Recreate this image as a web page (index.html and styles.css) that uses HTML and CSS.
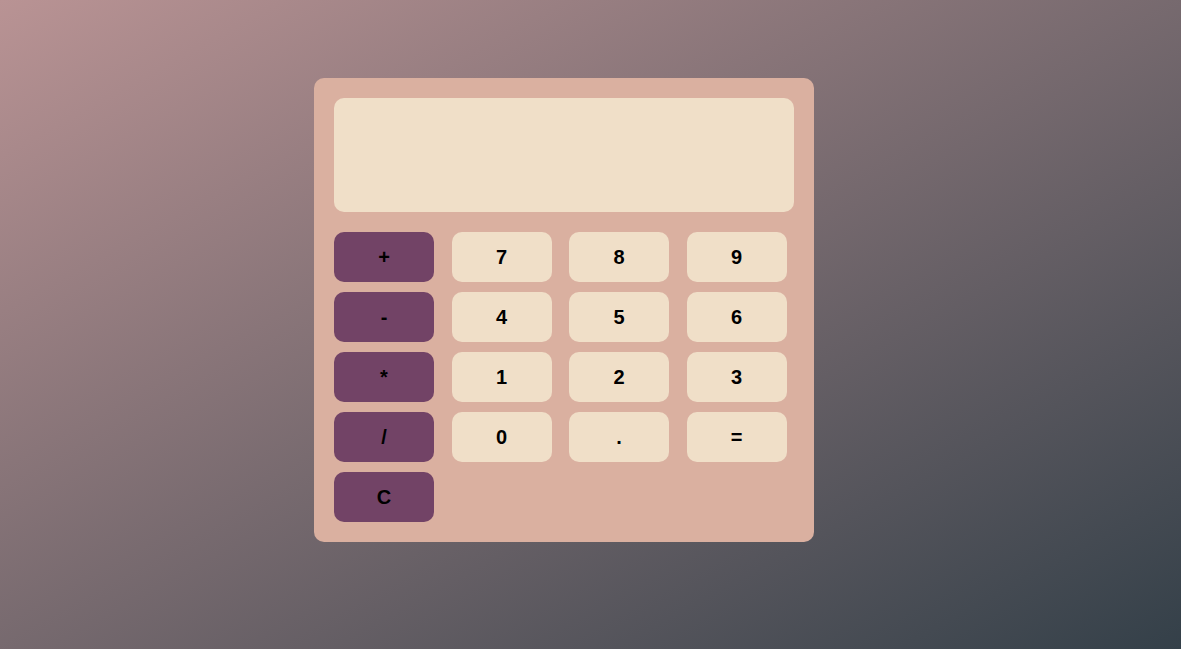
FILE: index.html
```html
<!DOCTYPE html>
<html lang="en">
<head>
<meta charset="utf-8">
<title>Calculator</title>
<link rel="stylesheet" href="styles.css">
</head>
<body>
<div class="calc">
  <div class="display"></div>
  <div class="keys">
    <button class="key op">+</button>
    <button class="key">7</button>
    <button class="key">8</button>
    <button class="key">9</button>
    <button class="key op">-</button>
    <button class="key">4</button>
    <button class="key">5</button>
    <button class="key">6</button>
    <button class="key op">*</button>
    <button class="key">1</button>
    <button class="key">2</button>
    <button class="key">3</button>
    <button class="key op">/</button>
    <button class="key">0</button>
    <button class="key">.</button>
    <button class="key">=</button>
    <button class="key op">C</button>
  </div>
</div>
</body>
</html>
```
FILE: styles.css
```css
html, body {
  margin: 0;
  height: 100%;
}
body {
  background: linear-gradient(to bottom right, #b99394, #344049);
  font-family: "Liberation Sans", Arial, sans-serif;
  display: flex;
  justify-content: flex-start;
  align-items: flex-start;
  padding: 78px 0 0 314px;
  box-sizing: border-box;
}
.calc {
  width: 500px;
  box-sizing: border-box;
  padding: 20px;
  background: #dab0a0;
  border-radius: 10px;
}
.display {
  height: 114px;
  background: #f0dfc8;
  border-radius: 10px;
  margin-bottom: 20px;
}
.keys {
  display: grid;
  grid-template-columns: repeat(4, 100px);
  column-gap: 17.5px;
  row-gap: 10px;
}
.key {
  height: 50px;
  border: none;
  border-radius: 10px;
  background: #f0dfc8;
  color: #000;
  font-family: "Liberation Sans", Arial, sans-serif;
  font-size: 20px;
  font-weight: bold;
  padding: 0;
}
.key.op {
  background: #724366;
}
```
